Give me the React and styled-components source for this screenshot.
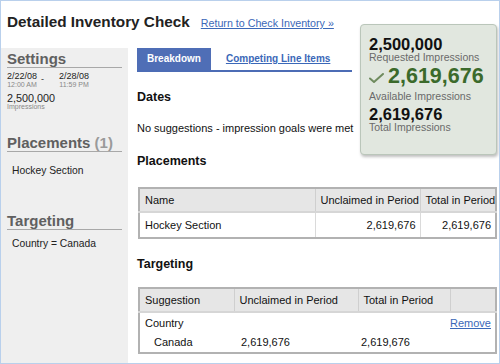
import React from "react";
import styled, { createGlobalStyle } from "styled-components";

const Global = createGlobalStyle`
  html, body { margin: 0; padding: 0; background: #fff; }
  body { font-family: "Liberation Sans", Arial, sans-serif; }
  * { box-sizing: border-box; }
`;

const Frame = styled.div`
  position: relative;
  width: 500px;
  height: 364px;
  border: 1px solid #b9d0ec;
  background: #fff;
  overflow: hidden;
  display: flex;
  flex-direction: column;
`;

const Header = styled.div`
  height: 47px;
  flex: none;
  display: flex;
  align-items: baseline;
  gap: 11px;
  padding: 12px 0 0 6px;
`;

const Title = styled.h1`
  margin: 0;
  font-size: 15.3px;
  line-height: 17px;
  font-weight: bold;
  color: #222;
`;

const Link = styled.a`
  color: ${(p) => p.$color || "#3b68b8"};
  font-size: ${(p) => p.$size || "10.7px"};
  font-weight: ${(p) => (p.$bold ? "bold" : "normal")};
  text-decoration: underline;
  cursor: pointer;
`;

const Body = styled.div`
  flex: 1;
  display: flex;
  min-height: 0;
`;

const Sidebar = styled.aside`
  width: 127px;
  flex: none;
  background: #efefef;
  padding: 0 6px 0 6px;
  display: flex;
  flex-direction: column;
`;

const SideTitle = styled.h2`
  margin: ${(p) => p.$mt || "3px"} 0 0 0;
  font-size: 15px;
  line-height: 16px;
  font-weight: bold;
  color: #606060;
  border-bottom: 1px solid #a8a8a8;
  span { color: #9a9a9a; }
`;

const DateRow = styled.div`
  display: flex;
  align-items: flex-start;
  margin-top: 3px;
`;

const DateCol = styled.div`
  display: flex;
  flex-direction: column;
  align-items: center;
`;

const DateMain = styled.div`
  font-size: 9px;
  line-height: 10px;
  color: #222;
`;

const Tiny = styled.div`
  font-size: 7px;
  line-height: 7px;
  color: #888;
`;

const Dash = styled.div`
  font-size: 9px;
  line-height: 9px;
  color: #333;
  margin: 4px 15px 0 4px;
`;

const Count = styled.div`
  margin-top: 5px;
  display: flex;
  flex-direction: column;
`;

const CountMain = styled.div`
  font-size: 10.8px;
  line-height: 10px;
  color: #222;
`;

const SideItem = styled.div`
  margin-top: ${(p) => p.$mt || "13px"};
  padding-left: 5px;
  font-size: 10.3px;
  line-height: 12px;
  color: #222;
`;

const Main = styled.main`
  flex: 1;
  padding: 0 3px 0 9px;
  display: flex;
  flex-direction: column;
`;

const Tabs = styled.div`
  width: 215px;
  display: flex;
  align-items: flex-end;
  border-bottom: 2px solid #4c6cb5;
`;

const Tab = styled.div`
  height: 22px;
  line-height: 22px;
  padding: 0 10px;
  font-size: 10px;
  font-weight: bold;
  color: #fff;
  background: #4f6eb6;
`;

const TabLink = styled(Link)`
  margin-left: 15px;
  line-height: 22px;
`;

const SectionTitle = styled.h3`
  margin: ${(p) => p.$mt || "18px"} 0 0 0;
  font-size: 12.5px;
  line-height: 15px;
  font-weight: bold;
  color: #111;
`;

const Note = styled.p`
  margin: 17px 0 0 0;
  font-size: 11px;
  line-height: 13px;
  color: #111;
`;

const Table = styled.table`
  margin-top: ${(p) => p.$mt || "18px"};
  margin-left: 1px;
  width: 357px;
  border-collapse: collapse;
  border: 2px solid #b2b2b2;
  font-size: 11px;
  color: #111;
  table-layout: fixed;
  white-space: nowrap;
`;

const Th = styled.th`
  height: 24px;
  background: #e6e6e6;
  font-weight: normal;
  text-align: ${(p) => p.$align || "left"};
  padding: 0 4px 0 5px;
  border: 1px solid #cfcfcf;
  border-bottom: 2px solid #d6d6d6;
`;

const Td = styled.td`
  height: ${(p) => p.$h || "26px"};
  text-align: ${(p) => p.$align || "left"};
  padding: ${(p) => p.$pad || "0 4px 0 5px"};
  border: ${(p) => (p.$plain ? "none" : "1px solid #dadada")};
  vertical-align: middle;
`;

const Summary = styled.div`
  position: absolute;
  left: 359px;
  top: 23px;
  width: 137px;
  height: 131px;
  background: #e1e7df;
  border: 1px solid #bac6ba;
  border-radius: 4px;
  box-shadow: 1px 2px 3px rgba(0, 0, 0, 0.25);
  padding: 12px 0 0 8px;
  display: flex;
  flex-direction: column;
`;

const BigNum = styled.div`
  margin-top: ${(p) => p.$mt || "0"};
  font-size: ${(p) => (p.$large ? "21.5px" : "16.5px")};
  line-height: ${(p) => (p.$large ? "20px" : "14px")};
  font-weight: bold;
  color: ${(p) => (p.$green ? "#3b6a2b" : "#111")};
  display: flex;
  align-items: center;
  gap: 4px;
`;

const SumLabel = styled.div`
  margin-top: ${(p) => p.$mt || "0"};
  font-size: 10.5px;
  line-height: 11px;
  color: #6a6a6a;
`;

const Check = () => (
  <svg width="15" height="10" viewBox="0 0 15 10" style={{ marginTop: 4 }}>
    <path
      d="M1 5.5 L5 9 L14 1"
      fill="none"
      stroke="#6f8b5e"
      strokeWidth="2"
      strokeLinecap="round"
      strokeLinejoin="round"
    />
  </svg>
);

export default function App() {
  return (
    <>
      <Global />
      <Frame>
        <Header>
          <Title>Detailed Inventory Check</Title>
          <Link>Return to Check Inventory »</Link>
        </Header>
        <Body>
          <Sidebar>
            <SideTitle>Settings</SideTitle>
            <DateRow>
              <DateCol>
                <DateMain>2/22/08</DateMain>
                <Tiny>12:00 AM</Tiny>
              </DateCol>
              <Dash>-</Dash>
              <DateCol>
                <DateMain>2/28/08</DateMain>
                <Tiny>11:59 PM</Tiny>
              </DateCol>
            </DateRow>
            <Count>
              <CountMain>2,500,000</CountMain>
              <Tiny>Impressions</Tiny>
            </Count>
            <SideTitle $mt="25px">
              Placements <span>(1)</span>
            </SideTitle>
            <SideItem>Hockey Section</SideItem>
            <SideTitle $mt="36px">Targeting</SideTitle>
            <SideItem $mt="8px">Country = Canada</SideItem>
          </Sidebar>
          <Main>
            <Tabs>
              <Tab>Breakdown</Tab>
              <TabLink $bold $size="10px">Competing Line Items</TabLink>
            </Tabs>
            <SectionTitle>Dates</SectionTitle>
            <Note>No suggestions - impression goals were met</Note>
            <SectionTitle $mt="18.5px">Placements</SectionTitle>
            <Table>
              <colgroup>
                <col style={{ width: 176 }} />
                <col style={{ width: 105 }} />
                <col style={{ width: 76 }} />
              </colgroup>
              <thead>
                <tr>
                  <Th>Name</Th>
                  <Th $align="right">Unclaimed in Period</Th>
                  <Th $align="right">Total in Period</Th>
                </tr>
              </thead>
              <tbody>
                <tr>
                  <Td>Hockey Section</Td>
                  <Td $align="right">2,619,676</Td>
                  <Td $align="right">2,619,676</Td>
                </tr>
              </tbody>
            </Table>
            <SectionTitle>Targeting</SectionTitle>
            <Table $mt="15px">
              <colgroup>
                <col style={{ width: 95 }} />
                <col style={{ width: 124 }} />
                <col style={{ width: 92 }} />
                <col style={{ width: 46 }} />
              </colgroup>
              <thead>
                <tr>
                  <Th>Suggestion</Th>
                  <Th>Unclaimed in Period</Th>
                  <Th>Total in Period</Th>
                  <Th />
                </tr>
              </thead>
              <tbody>
                <tr>
                  <Td $plain $h="21px">Country</Td>
                  <Td $plain $h="21px" />
                  <Td $plain $h="21px" />
                  <Td $plain $h="21px" $align="right" $pad="0 4px 0 0">
                    <Link $size="11px">Remove</Link>
                  </Td>
                </tr>
                <tr>
                  <Td $plain $h="20px" $pad="0 0 0 14px">Canada</Td>
                  <Td $plain $h="20px" $pad="0 0 0 7px">2,619,676</Td>
                  <Td $plain $h="20px" $pad="0 0 0 3px">2,619,676</Td>
                  <Td $plain $h="20px" />
                </tr>
              </tbody>
            </Table>
          </Main>
        </Body>
        <Summary>
          <BigNum>2,500,000</BigNum>
          <SumLabel $mt="1px">Requested Impressions</SumLabel>
          <BigNum $large $green $mt="3px">
            <Check />
            2,619,676
          </BigNum>
          <SumLabel $mt="5px">Available Impressions</SumLabel>
          <BigNum $mt="5px">2,619,676</BigNum>
          <SumLabel $mt="1px">Total Impressions</SumLabel>
        </Summary>
      </Frame>
    </>
  );
}
